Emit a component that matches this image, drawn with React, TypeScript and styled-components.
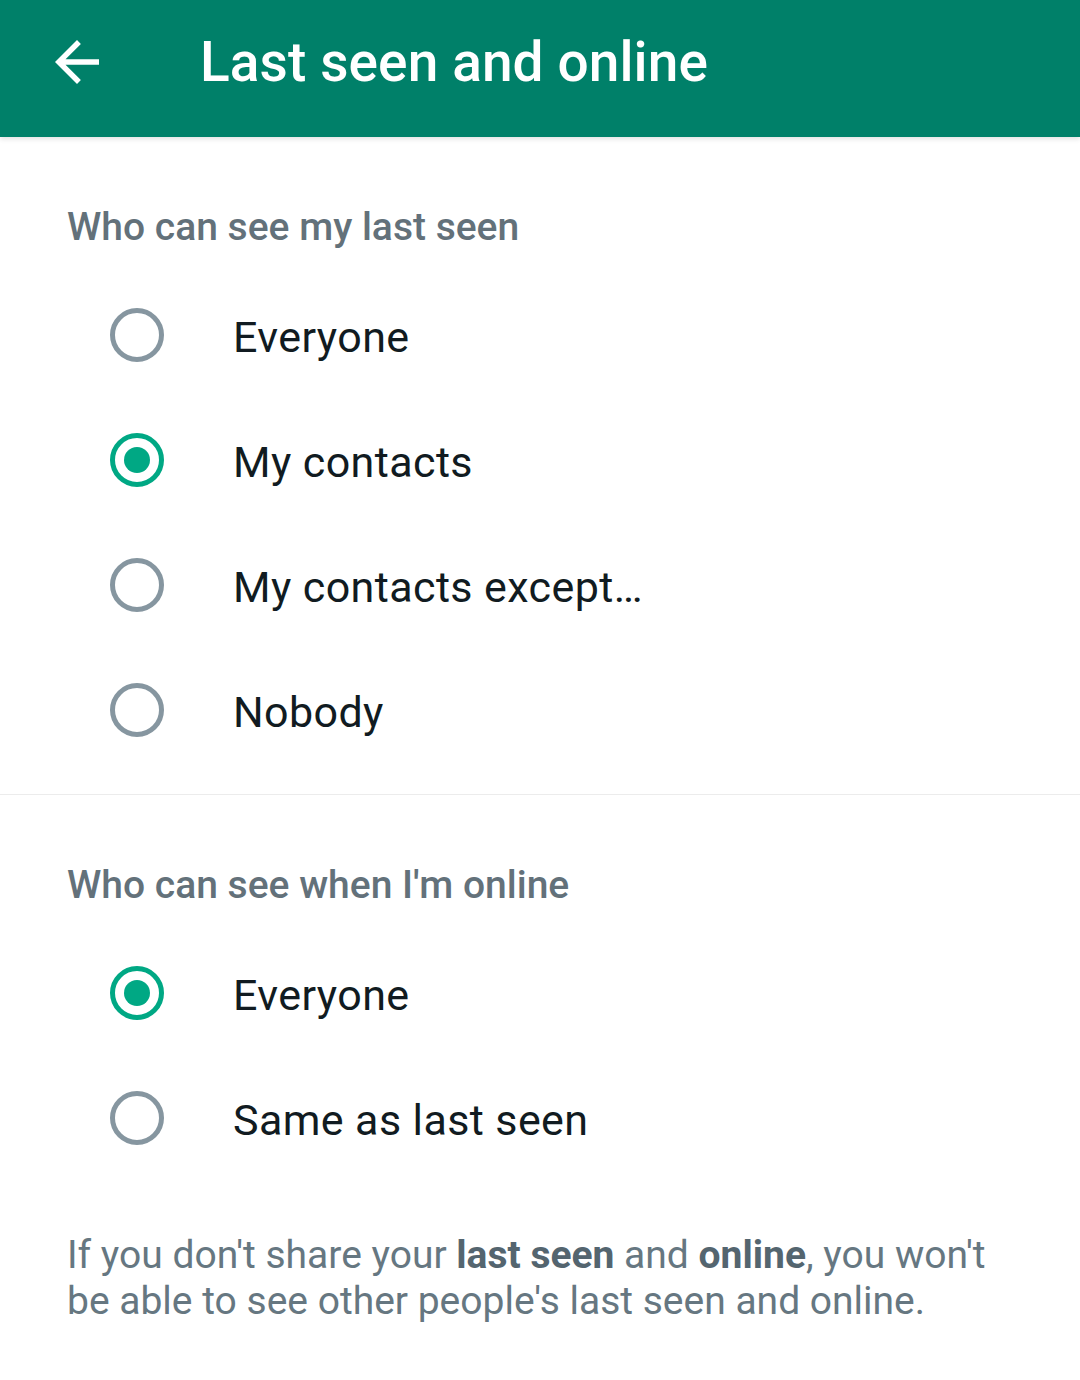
import React, { useState } from 'react';
import styled, { createGlobalStyle } from 'styled-components';

const GlobalStyle = createGlobalStyle`
  html, body {
    margin: 0;
    padding: 0;
    background: #ffffff;
    font-family: Roboto, 'Noto Sans', Arial, sans-serif;
  }
`;

const lastSeenOptions = ['Everyone', 'My contacts', 'My contacts except…', 'Nobody'];
const onlineOptions = ['Everyone', 'Same as last seen'];

function ArrowBack() {
  return (
    <svg width="66" height="66" viewBox="0 0 24 24" fill="#ffffff">
      <path d="M20 11H7.83l5.59-5.59L12 4l-8 8 8 8 1.41-1.41L7.83 13H20v-2z" />
    </svg>
  );
}

function OptionGroup({
  options,
  value,
  onChange,
}: {
  options: string[];
  value: number;
  onChange: (i: number) => void;
}) {
  return (
    <div>
      {options.map((label, i) => (
        <OptionRow key={label} onClick={() => onChange(i)}>
          <Radio $checked={i === value} />
          <OptionLabel>{label}</OptionLabel>
        </OptionRow>
      ))}
    </div>
  );
}

export default function App() {
  const [lastSeen, setLastSeen] = useState(1);
  const [online, setOnline] = useState(0);

  return (
    <Page>
      <GlobalStyle />
      <Toolbar>
        <BackButton aria-label="Back">
          <ArrowBack />
        </BackButton>
        <Title>Last seen and online</Title>
      </Toolbar>

      <Section>
        <SectionTitle>Who can see my last seen</SectionTitle>
        <OptionGroup options={lastSeenOptions} value={lastSeen} onChange={setLastSeen} />
      </Section>

      <Section $last>
        <SectionTitle>Who can see when I'm online</SectionTitle>
        <OptionGroup options={onlineOptions} value={online} onChange={setOnline} />
        <Note>
          If you don't share your <b>last seen</b> and <b>online</b>, you won't be able to see
          other people's last seen and online.
        </Note>
      </Section>
    </Page>
  );
}

const Page = styled.div`
  width: 1080px;
  min-height: 1380px;
  background: #ffffff;
`;

const Toolbar = styled.header`
  height: 137px;
  background: #008069;
  display: flex;
  align-items: center;
  padding-left: 44px;
  box-shadow: 0 2px 5px rgba(0, 0, 0, 0.12);
  position: relative;
`;

const BackButton = styled.button`
  border: none;
  background: none;
  padding: 0;
  width: 66px;
  height: 66px;
  display: flex;
  margin-top: -14px;
`;

const Title = styled.h1`
  margin: -14px 0 0 90px;
  color: #ffffff;
  font-size: 55px;
  font-weight: 500;
  letter-spacing: 0.1px;
`;

const Section = styled.section<{ $last?: boolean }>`
  padding: 65px 0 ${(p) => (p.$last ? '60px' : '22px')};
  border-bottom: ${(p) => (p.$last ? 'none' : '1px solid #ececec')};
`;

const SectionTitle = styled.h2`
  margin: 0 0 20px 67px;
  height: 50px;
  line-height: 50px;
  font-size: 39px;
  font-weight: 500;
  color: #63717a;
`;

const OptionRow = styled.label`
  height: 125px;
  display: flex;
  align-items: center;
  padding-left: 110px;
  cursor: pointer;
`;

const Radio = styled.span<{ $checked: boolean }>`
  width: 54px;
  height: 54px;
  box-sizing: border-box;
  border-radius: 50%;
  border: 5px solid ${(p) => (p.$checked ? '#00a884' : '#8696a0')};
  display: flex;
  align-items: center;
  justify-content: center;
  flex-shrink: 0;

  &::after {
    content: '';
    width: 26px;
    height: 26px;
    border-radius: 50%;
    background: #00a884;
    display: ${(p) => (p.$checked ? 'block' : 'none')};
  }
`;

const OptionLabel = styled.span`
  margin-left: 69px;
  margin-top: 4px;
  font-size: 43px;
  letter-spacing: 0.4px;
  color: #111b21;
`;

const Note = styled.p`
  margin: 52px 70px 0 67px;
  font-size: 39px;
  line-height: 46px;
  color: #667781;

  b {
    font-weight: 700;
    color: #54656f;
  }
`;
